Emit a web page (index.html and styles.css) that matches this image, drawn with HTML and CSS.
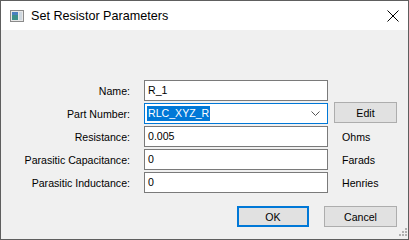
FILE: index.html
```html
<!DOCTYPE html>
<html lang="en">

<head>
    <meta charset="UTF-8">
    <title>Set Resistor Parameters</title>
    <link rel="stylesheet" href="styles.css">
</head>

<body>
    <div class="window">
        <div class="titlebar">
            <svg class="app-icon" width="14" height="12" viewBox="0 0 14 12">
                <rect x="0.5" y="0.5" width="13" height="11" fill="#e8e8e8" stroke="#8a8a8a"/>
                <rect x="2" y="2" width="6" height="8" fill="#3d8f8a"/>
                <rect x="2" y="2" width="6" height="3" fill="#4a7fc0"/>
                <rect x="9" y="2" width="3" height="8" fill="#cfd8e0"/>
            </svg>
            <span class="title">Set Resistor Parameters</span>
            <svg class="close" width="12" height="12" viewBox="0 0 12 12">
                <path d="M0.5 0.5 L11.5 11.5 M11.5 0.5 L0.5 11.5" stroke="#000" stroke-width="1"/>
            </svg>
        </div>
        <div class="content">
            <div class="form">
                <label class="lbl">Name:</label>
                <div class="field">R_1</div>
                <div></div>

                <label class="lbl">Part Number:</label>
                <div class="field combo">
                    <span class="sel">RLC_XYZ_R</span>
                    <svg class="chevron" width="9" height="5" viewBox="0 0 9 5">
                        <path d="M0.5 0.5 L4.5 4.5 L8.5 0.5" fill="none" stroke="#555" stroke-width="1"/>
                    </svg>
                </div>
                <button class="btn edit">Edit</button>

                <label class="lbl">Resistance:</label>
                <div class="field">0.005</div>
                <span class="unit">Ohms</span>

                <label class="lbl">Parasitic Capacitance:</label>
                <div class="field">0</div>
                <span class="unit">Farads</span>

                <label class="lbl">Parasitic Inductance:</label>
                <div class="field">0</div>
                <span class="unit">Henries</span>
            </div>
            <div class="actions">
                <button class="btn ok">OK</button>
                <button class="btn cancel">Cancel</button>
            </div>
            <svg class="grip" width="10" height="10" viewBox="0 0 10 10">
                <g fill="#b0b0b0">
                    <rect x="8" y="0" width="2" height="2"/>
                    <rect x="5" y="3" width="2" height="2"/>
                    <rect x="8" y="3" width="2" height="2"/>
                    <rect x="2" y="6" width="2" height="2"/>
                    <rect x="5" y="6" width="2" height="2"/>
                    <rect x="8" y="6" width="2" height="2"/>
                </g>
            </svg>
        </div>
    </div>
</body>

</html>
```

FILE: styles.css
```css
body {
    margin: 0;
    font-family: "Liberation Sans", Arial, sans-serif;
    font-size: 10.6px;
    color: #000;
}

.window {
    position: relative;
    width: 409px;
    height: 240px;
    box-sizing: border-box;
    border: 1px solid #5e5e5e;
    background: #f0f0f0;
    display: flex;
    flex-direction: column;
}

.titlebar {
    height: 29px;
    background: #fff;
    display: flex;
    align-items: center;
    padding-left: 9px;
    padding-right: 9px;
}

.app-icon {
    display: block;
    margin-right: 7px;
}

.title {
    flex: 1;
    font-size: 12.6px;
}

.close {
    display: block;
}

.content {
    flex: 1;
    padding-top: 50px;
}

.form {
    display: grid;
    grid-template-columns: 137px 184px 63px;
    grid-auto-rows: 21px;
    column-gap: 6px;
    row-gap: 2px;
}

.lbl {
    text-align: right;
    padding-right: 8px;
    align-self: center;
    white-space: nowrap;
}

.field {
    box-sizing: border-box;
    height: 21px;
    border: 1px solid #7a7a7a;
    background: #fff;
    padding: 0 3px;
    line-height: 19px;
    white-space: nowrap;
}

.combo {
    border-color: #0078d7;
    display: flex;
    align-items: center;
    justify-content: space-between;
    padding: 0 7px 0 2px;
}

.sel {
    background: #0078d7;
    color: #fff;
    line-height: 15px;
    padding: 0 1px;
}

.chevron {
    display: block;
}

.unit {
    align-self: center;
    padding-left: 8px;
}

.btn {
    box-sizing: border-box;
    height: 21px;
    margin: 0;
    padding: 0;
    font-family: inherit;
    font-size: 10.6px;
    color: #000;
    background: #e1e1e1;
    border: 1px solid #adadad;
}

.edit {
    margin-top: -1px;
}

.actions {
    display: flex;
    justify-content: flex-end;
    gap: 15px;
    margin-top: 13px;
    padding-right: 11px;
}

.ok {
    width: 72px;
    border: 2px solid #0078d7;
}

.cancel {
    width: 73px;
}

.grip {
    position: absolute;
    right: 1px;
    bottom: 1px;
}
```
